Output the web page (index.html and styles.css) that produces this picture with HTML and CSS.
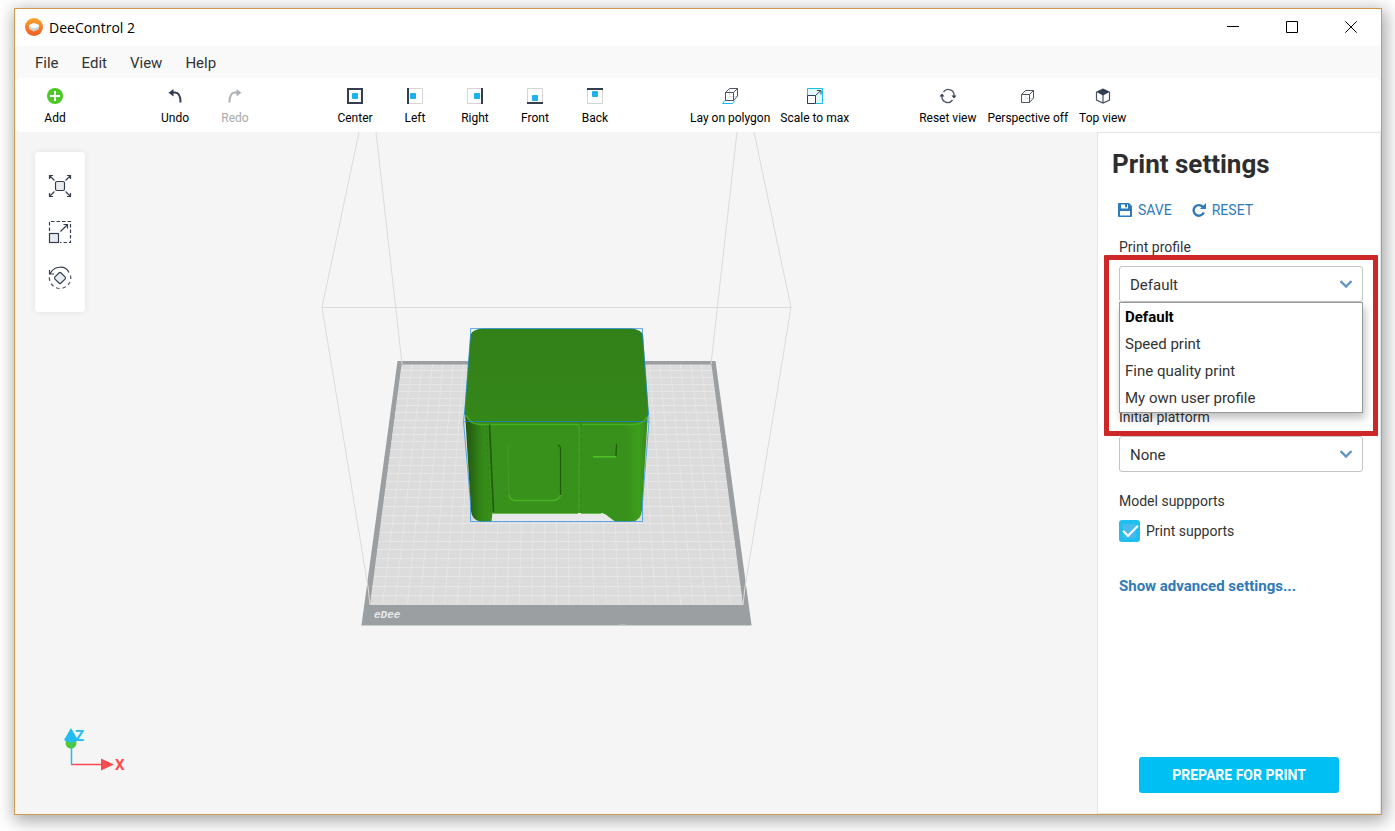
FILE: index.html
```html
<!DOCTYPE html>
<html lang="en">
<head>
<meta charset="utf-8">
<title>DeeControl 2</title>
<link rel="stylesheet" href="styles.css">
</head>
<body>
<div class="window">
  <header class="titlebar">
    <svg class="logo" viewBox="0 0 18 18" aria-hidden="true">
      <defs><linearGradient id="lg" x1="0" y1="0" x2="0" y2="1"><stop offset="0" stop-color="#fba52c"/><stop offset="1" stop-color="#f15a24"/></linearGradient></defs>
      <circle cx="9" cy="9" r="9" fill="url(#lg)"/>
      <path d="M4 7 9 5l5 2v4L9 13.500 4 11z" fill="#cfcfcf"/>
      <path d="M4 7 9 5l5 2v1.500L9 10.500 4 8.500z" fill="#fff"/>
    </svg>
    <h1 class="app-name">DeeControl 2</h1>
    <div class="window-buttons">
      <button class="win-btn" aria-label="Minimize"><svg viewBox="0 0 12 12"><path d="M0 5.500h12"/></svg></button>
      <button class="win-btn" aria-label="Maximize"><svg viewBox="0 0 12 12"><path d="M.5.500h11v11H.5z"/></svg></button>
      <button class="win-btn" aria-label="Close"><svg viewBox="0 0 12 12"><path d="M.3.300l11.400 11.400M11.700.300.300 11.700"/></svg></button>
    </div>
  </header>

  <nav class="menubar">
    <button class="menu-item">File</button>
    <button class="menu-item">Edit</button>
    <button class="menu-item">View</button>
    <button class="menu-item">Help</button>
  </nav>

  <div class="toolbar" role="toolbar" aria-label="Tools">
    <div class="group">
      <button class="tool wide"><svg viewBox="0 0 18 18"><circle cx="9" cy="9" r="8" fill="#4cc926"/><path d="M9 4v10M4 9h10" stroke="#fff" stroke-width="2"/></svg>Add</button>
    </div>
    <div class="group">
      <button class="tool wide"><svg viewBox="0 0 18 18"><path d="M5 5.500h4c4 0 5.500 3 5.500 10" fill="none" stroke="#333e50" stroke-width="2"/><path d="M7.500 2v7.500L2.500 5.700z" fill="#333e50"/></svg>Undo</button>
      <button class="tool wide" disabled><svg viewBox="0 0 18 18"><path d="M13 5.500H9c-4 0-5.500 3-5.500 10" fill="none" stroke="#adb2b9" stroke-width="2"/><path d="M10.500 2v7.500l5-3.800z" fill="#adb2b9"/></svg>Redo</button>
    </div>
    <div class="group">
      <button class="tool wide"><svg viewBox="0 0 18 18"><path d="M2 2h14v14H2z" fill="none" stroke="#333e50" stroke-width="2"/><rect x="6" y="6" width="6" height="6" rx="1" fill="#19b1ee"/></svg>Center</button>
      <button class="tool wide"><svg viewBox="0 0 18 18"><path d="M2.500 1.500h14v15h-14" fill="none" stroke="#d4d4d4"/><path d="M2 1v16" stroke="#333e50" stroke-width="2"/><rect x="4" y="6" width="6" height="6" rx="1" fill="#19b1ee"/></svg>Left</button>
      <button class="tool wide"><svg viewBox="0 0 18 18"><path d="M15.500 1.500h-14v15h14" fill="none" stroke="#d4d4d4"/><path d="M16 1v16" stroke="#333e50" stroke-width="2"/><rect x="8" y="6" width="6" height="6" rx="1" fill="#19b1ee"/></svg>Right</button>
      <button class="tool wide"><svg viewBox="0 0 18 18"><path d="M1.500 15.500v-14h15v14" fill="none" stroke="#d4d4d4"/><path d="M1 16h16" stroke="#333e50" stroke-width="2"/><rect x="6" y="8" width="6" height="6" rx="1" fill="#19b1ee"/></svg>Front</button>
      <button class="tool wide"><svg viewBox="0 0 18 18"><path d="M1.500 2.500v14h15v-14" fill="none" stroke="#d4d4d4"/><path d="M1 2h16" stroke="#333e50" stroke-width="2"/><rect x="6" y="4" width="6" height="6" rx="1" fill="#19b1ee"/></svg>Back</button>
    </div>
    <div class="group">
      <button class="tool"><svg viewBox="0 0 18 18"><path d="M4.500 13 1.500 16.500h10L14 13.500" fill="none" stroke="#19b9ee"/><path d="M8.500 2v8l-3 3M9 9.500h7" fill="none" stroke="#d9dce0"/><path d="M4.500 5.500h8v8h-8zM4.500 5.500l4-4h8v7.500l-4 4.500M12.500 5.500l4-4" fill="none" stroke="#4b5566"/></svg>Lay on polygon</button>
      <button class="tool"><svg viewBox="0 0 18 18"><path d="M1.500 1.500h15v15h-15z" fill="#e3f7fd" stroke="#19c0ee"/><path d="M1.500 8.500h8v8h-8z" fill="#fff" stroke="#333e50"/><path d="M9.500 8.500 15 3.500M11 3.500h4v4" fill="none" stroke="#333e50"/></svg>Scale to max</button>
    </div>
    <div class="group group-view">
      <button class="tool"><svg viewBox="0 0 18 18"><path d="M4.500 5A5.800 5.800 0 0 1 15 9M13.500 13A5.800 5.800 0 0 1 3 9" fill="none" stroke="#4b5566" stroke-width="1.300"/><path d="M12.500 8.500h5L15 11.500zM.5 9.500h5L3 6.500z" fill="#333e50"/></svg>Reset view</button>
      <button class="tool"><svg viewBox="0 0 18 18"><path d="M6.500 4v7l-3.500 4M7 11.500h7" fill="none" stroke="#e2e4e7"/><path d="M2.500 7.500h8v8h-8zM2.500 7.500l4-4h8v7.500l-4 4.500M10.500 7.500l4-4" fill="none" stroke="#4b5566"/></svg>Perspective off</button>
      <button class="tool"><svg viewBox="0 0 18 18"><path d="M2.500 5v8L9 16l6.500-3V5M9 8v8" fill="none" stroke="#4b5566" stroke-width="1.200"/><path d="M2 4.800 9 1.500l7 3.300L9 8.500z" fill="#333e50"/></svg>Top view</button>
    </div>
  </div>

  <main class="workspace">
    <section class="viewport" aria-label="Build area">
      <svg class="scene" viewBox="15 132 1082 682" role="img" aria-label="Model on eDee platform">
        <defs>
          <linearGradient id="top" x1="0" y1="0" x2="0" y2="1"><stop offset="0" stop-color="#328019"/><stop offset="1" stop-color="#358719"/></linearGradient>
          <linearGradient id="front" x1="0" x2="1"><stop offset="0" stop-color="#215810"/><stop offset=".04" stop-color="#286a12"/><stop offset=".09" stop-color="#348718"/><stop offset=".14" stop-color="#38911a"/><stop offset=".88" stop-color="#38911a"/><stop offset=".95" stop-color="#3d9d1c"/><stop offset="1" stop-color="#36891a"/></linearGradient>
        </defs>
        <path d="M397.500 361H715.500L751.500 625H361.500z" fill="#9b9fa1"/>
        <path d="M361 625.500H751.500" stroke="#cdd0d1"/>
        <path d="M401.500 364.500H711.500L743 605H370z" fill="#dcdcdc"/>
        <path d="M411.900 364.500 382.500 605M422.200 364.500 394.900 605M432.500 364.500 407.300 605M442.900 364.500 419.800 605M453.200 364.500 432.200 605M463.500 364.500 444.600 605M473.900 364.500 457.100 605M484.200 364.500 469.500 605M494.500 364.500 481.900 605M504.800 364.500 494.300 605M515.200 364.500 506.800 605M525.500 364.500 519.200 605M535.800 364.500 531.600 605M546.200 364.500 544.100 605M556.500 364.500V605M566.800 364.500 568.900 605M577.200 364.500 581.400 605M587.500 364.500 593.800 605M597.800 364.500 606.200 605M608.200 364.500 618.700 605M618.500 364.500 631.100 605M628.800 364.500 643.500 605M639.100 364.500 655.900 605M649.500 364.500 668.400 605M659.800 364.500 680.800 605M670.100 364.500 693.200 605M680.500 364.500 705.700 605M690.800 364.500 718.100 605M701.100 364.500 730.500 605" class="grid-line"/>
        <path d="M371 595.500H742M372 586.500H741M374 576.500H739M375 567.500H738M376 558.500H737M377 549.500H736M379 541.500H735M380 532.500H733M381 523.500H732M382 515.500H731M383 506.500H730M384 497.500H729M385 489.500H728M386 481.500H727M387 473.500H726M388 465.500H725M389 457.500H724M390 449.500H723M391 441.500H722M392 434.500H721M393 427.500H720M394 420.500H719M395 412.500H718M396 405.500H717M397 398.500H716M398 391.500H715M399 384.500H714M400 377.500H713M401 370.500H712" class="grid-line"/>
        <path d="M359 132 322 307.500H791L754 132M322 307.500 368 587M791 307.500 745 587M376 132 402 364M737 132 711 364M368 587 370 605M745 587 743 605" fill="none" stroke="#dbdbdb"/>
        <text x="374" y="618" class="platform-name">eDee</text>
        <path d="M619 625h7" stroke="#c3c6c7"/>

        <path d="M485 512H620V521H485z" fill="#e8e8e8"/>
        <path d="M465 412 471 511Q472 520 480 521.500H491.500L492.500 513H602Q606 514 609 517L615 521.500H632Q641 521 642 510L648 412z" fill="url(#front)"/>
        <path d="M470.500 335Q472 329 484 328.500H630Q641 329 643 335L648.500 411Q648 422 634 423.500H480Q465 422 464.500 411z" fill="url(#top)"/>
        <path d="M466 415Q470 425 482 424.500H489M491 424.500H579M582 424.500H633Q644 424 647 417" fill="none" stroke="#46b022" stroke-width="1.400"/>
        <path d="M489.500 425 493.500 512" stroke="#205b0e" stroke-width="1.600"/>
        <path d="M486.500 425 490.500 512" stroke="#2c7415" stroke-dasharray="3 3" stroke-width=".6"/>
        <path d="M579.300 425 579 513" stroke="#43a722"/>
        <path d="M581.500 425 580.500 513" stroke="#2f7d16" stroke-dasharray="2 5" stroke-width=".7"/>
        <path d="M511 445.500Q507.500 446 507.800 449L509 495" fill="none" stroke="#3f9f20"/>
        <path d="M509 495Q510 500 515 500.500H553Q559 500 560.500 495" fill="none" stroke="#48b425" stroke-width="1.400"/>
        <path d="M558 445Q560.500 446 560.500 449V495" fill="none" stroke="#205b0e" stroke-width="1.200"/>
        <path d="M593 456.800H616" stroke="#50c52b" stroke-width="1.500"/>
        <path d="M616.500 444 616 456" stroke="#205b0e" stroke-width="1.300"/>
        <path d="M493 513.500H578M581 513.500H601" stroke="#48aa27" stroke-width=".8"/>
        <path d="M470.500 335V328.500H642.500V335L648.500 415M470.500 335 464.500 415M463.500 421.500H649M463.500 421.500 470.500 502V521.500H642.500V502L649 421.500M464.500 412 463.500 421.500M648.500 412 649 421.500" fill="none" stroke="#1687e8" stroke-opacity=".65"/>
      </svg>

      <div class="palette">
        <button class="palette-btn" aria-label="Move"><svg viewBox="0 0 24 24"><rect x="7.500" y="7.500" width="9" height="9" rx="1.500" fill="#e9ecef" stroke="#333e50" stroke-width="1.200"/><path d="M6.500 6.500 1.500 1.500M1.500 5V1.500H5M17.500 6.500l5-5M19 1.500h3.500V5M6.500 17.500l-5 5M1.500 19v3.500H5M17.500 17.500l5 5M19 22.500h3.500V19" fill="none" stroke="#333e50" stroke-width="1.200"/></svg></button>
        <button class="palette-btn" aria-label="Scale"><svg viewBox="0 0 24 24"><path d="M1.500 11V1.500h21v21H12" fill="none" stroke="#333e50" stroke-width="1.200" stroke-dasharray="3.500 2"/><rect x="1.500" y="13.500" width="9" height="9" fill="#e9ecef" stroke="#333e50" stroke-width="1.200"/><path d="M12.500 11.500l7-7M15.500 4.500h4v4" fill="none" stroke="#333e50" stroke-width="1.200"/></svg></button>
        <button class="palette-btn" aria-label="Rotate"><svg viewBox="0 0 24 24"><rect x="7.700" y="7.700" width="8.600" height="8.600" rx="1.500" transform="rotate(45 12 12)" fill="#e9ecef" stroke="#333e50" stroke-width="1.200"/><path d="M2 8C6-.5 17.500-1 21 6.500M1.500 4V8H6" fill="none" stroke="#333e50" stroke-width="1.200"/><path d="M22.500 9.500A10.700 10.700 0 1 1 1.500 10" fill="none" stroke="#4b5566" stroke-width="1.200" stroke-dasharray="3.500 3"/></svg></button>
      </div>

      <svg class="axes" viewBox="0 0 64 46" role="img" aria-label="Axes">
        <circle cx="8" cy="17" r="5.500" fill="#52c92b"/>
        <path d="M8 38.500h32" stroke="#fb4b50" stroke-width="1.500"/>
        <path d="M38 32.500v12l13-6z" fill="#fb4b50"/>
        <path d="M8.500 39V14" stroke="#22bdf0" stroke-width="1.500"/>
        <path d="M8 2l7 12q-7 5-14 0z" fill="#22bdf0"/>
        <text x="12" y="15" class="axis-label axis-z">Z</text>
        <text x="52" y="44" class="axis-label axis-x">X</text>
      </svg>
    </section>

    <aside class="panel">
      <h2 class="panel-title">Print settings</h2>
      <div class="actions">
        <button class="action"><svg viewBox="0 0 14 14"><path fill-rule="evenodd" d="M1 0h10l3 3v10q0 1-1 1H1q-1 0-1-1V1q0-1 1-1zM3 1.500v4h7v-4H9v2.700H7V1.500zM2 8v4.500h10V8z" fill="#2f7ab9"/></svg>SAVE</button>
        <button class="action"><svg viewBox="0 0 14 14"><path d="M11 4A5.300 5.300 0 1 0 11.800 9.500" fill="none" stroke="#2f7ab9" stroke-width="2.400"/><path d="M14 0v6H8z" fill="#2f7ab9"/></svg>RESET</button>
      </div>

      <div class="field field-profile">
        <label for="profile">Print profile</label>
        <div class="select-box">
          <select id="profile"><option>Default</option><option>Speed print</option><option>Fine quality print</option><option>My own user profile</option></select>
          <svg class="chevron" viewBox="0 0 12 8"><path d="M.5 1l5.500 5.500L11.500 1" fill="none" stroke="#6494c4" stroke-width="2.400"/></svg>
          <div class="options" role="listbox" aria-label="Print profile">
            <button class="option selected" role="option" aria-selected="true">Default</button>
            <button class="option" role="option">Speed print</button>
            <button class="option" role="option">Fine quality print</button>
            <button class="option" role="option">My own user profile</button>
          </div>
        </div>
        <div class="highlight"></div>
      </div>

      <div class="field">
        <label for="platform">Initial platform</label>
        <div class="select-box">
          <select id="platform"><option>None</option></select>
          <svg class="chevron" viewBox="0 0 12 8"><path d="M.5 1l5.500 5.500L11.500 1" fill="none" stroke="#6494c4" stroke-width="2.400"/></svg>
        </div>
      </div>

      <div class="field" role="group" aria-labelledby="supports-label">
        <span id="supports-label">Model suppports</span>
        <label class="check"><input type="checkbox" checked>Print supports</label>
      </div>

      <a class="advanced" href="#">Show advanced settings...</a>
      <button class="prepare">PREPARE FOR PRINT</button>
    </aside>
  </main>
</div>
</body>
</html>
```
FILE: styles.css
```css
* { box-sizing: border-box; }

body {
  margin: 0;
  min-height: 100vh;
  padding: 8px 13px 16px 14px;
  display: flex;
  background: #fff;
  color: #333;
  font-family: Roboto, "Liberation Sans", sans-serif;
  font-size: 14px;
}

button {
  margin: 0;
  padding: 0;
  border: 0;
  background: none;
  color: inherit;
  font: inherit;
  cursor: pointer;
}

.window {
  flex: 1;
  display: flex;
  flex-direction: column;
  border: 1px solid #cf9a4b;
  background: #f5f5f5;
  box-shadow: 2px 4px 16px 2px rgba(0, 0, 0, .35);
}

.titlebar {
  height: 37px;
  padding: 0 1px 1px 10px;
  display: flex;
  align-items: center;
  background: #fff;
}

.logo { width: 18px; height: 18px; }

.app-name {
  margin: 0 0 0 6px;
  color: #000;
  font: 400 14px "Open Sans", sans-serif;
}

.window-buttons { margin-left: auto; display: flex; }

.win-btn {
  width: 59px;
  height: 36px;
  display: grid;
  place-items: center;
}

.win-btn svg {
  width: 12px;
  height: 12px;
  fill: none;
  stroke: #000;
}

.menubar {
  height: 32px;
  padding: 2px 0 0 20px;
  display: flex;
  align-items: center;
  gap: 23px;
  background: #f9f9f9;
}

.menu-item { font-size: 15px; }

.toolbar {
  padding-left: 10px;
  display: flex;
  gap: 60px;
  height: 54px;
  border-radius: 5px;
  background: #fff;
}

.group { display: flex; }
.group-view { gap: 1px; }

.tool {
  padding: 9px 5px 0;
  display: flex;
  flex-direction: column;
  align-items: center;
  gap: 5px;
  color: #000;
  font-size: 12px;
  line-height: 16px;
  white-space: nowrap;
}

.tool.wide { width: 60px; }
.tool:disabled { color: #aaa; }
.tool svg { width: 18px; height: 18px; }

.workspace { flex: 1; display: flex; }

.viewport {
  flex: 1;
  position: relative;
  display: flex;
  min-width: 0;
}

.scene { flex: 1; min-width: 0; }

.grid-line { fill: none; stroke: #e6e6e6; }

.platform-name {
  fill: #e8e9e9;
  font: italic 700 11px "Liberation Mono", monospace;
}

.palette {
  position: absolute;
  left: 20px;
  top: 20px;
  width: 50px;
  padding: 11px 0;
  border-radius: 4px;
  background: #fff;
  box-shadow: 0 0 6px rgba(0, 0, 0, .08);
}

.palette-btn {
  display: grid;
  place-items: center;
  width: 50px;
  height: 46px;
}

.palette-btn svg { width: 24px; height: 24px; }

.axes {
  position: absolute;
  left: 48px;
  bottom: 42px;
  width: 64px;
  height: 46px;
  overflow: visible;
}

.axis-label { font: 700 15px Roboto, sans-serif; }
.axis-z { fill: #22bdf0; }
.axis-x { fill: #fb4b50; }

.panel {
  width: 284px;
  padding: 16px 17px 20px 21px;
  display: flex;
  flex-direction: column;
  border: 1px solid #e6e6e6;
  background: #fff;
}

.panel-title {
  margin: 0 0 0 -7px;
  color: #2e2e2e;
  font-size: 26px;
  line-height: 30px;
}

.actions {
  margin: 21px 0 0 -1px;
  display: flex;
  gap: 20px;
  color: #2f7ab9;
}

.action {
  display: flex;
  align-items: center;
  gap: 6px;
  line-height: 20px;
}

.action svg { width: 14px; height: 14px; }

.field {
  position: relative;
  margin-top: 20px;
  display: flex;
  flex-direction: column;
  gap: 10px;
  line-height: 18px;
}

.field-profile {
  margin: 18px 0 86px;
  z-index: 1;
}

.select-box { position: relative; display: flex; }

select {
  flex: 1;
  height: 36px;
  padding: 2px 10px 0;
  appearance: none;
  border: 1px solid #c4c4c4;
  border-radius: 3px;
  background: #fff;
  color: #333;
  font: 15px Roboto, sans-serif;
}

.chevron {
  position: absolute;
  right: 11px;
  top: 14px;
  width: 12px;
  height: 8px;
  pointer-events: none;
}

.options {
  position: absolute;
  left: 0;
  right: 0;
  top: 36px;
  padding: 1px 0 0;
  display: flex;
  flex-direction: column;
  border: 1px solid #999;
  background: #fff;
  box-shadow: 2px 5px 8px rgba(0, 0, 0, .25);
}

.option {
  padding: 0 5px;
  font-size: 15px;
  line-height: 27px;
  text-align: left;
}

.option.selected { color: #000; font-weight: 700; }

.highlight {
  position: absolute;
  left: -15px;
  right: -15px;
  top: 17px;
  height: 181px;
  border: 5px solid #cd2727;
  border-radius: 1px;
  pointer-events: none;
}

.check {
  display: flex;
  align-items: center;
  gap: 6px;
}

.check input {
  appearance: none;
  display: grid;
  place-items: center;
  width: 21px;
  height: 22px;
  margin: 0;
  border: 4px solid #1fbff0;
  border-radius: 3px;
  background: #49b9ee;
}

.check input::before {
  content: "";
  width: 13px;
  height: 6px;
  margin-bottom: 4px;
  border: solid #fff;
  border-width: 0 0 2px 2px;
  transform: rotate(-45deg);
}

.advanced {
  margin-top: 34px;
  color: #2f7ab9;
  font-size: 15px;
  font-weight: 700;
  line-height: 20px;
  text-decoration: none;
}

.prepare {
  height: 36px;
  margin: auto 24px 0 20px;
  border-radius: 3px;
  background: #00bff3;
  color: #fff;
  font-weight: 700;
}
```
